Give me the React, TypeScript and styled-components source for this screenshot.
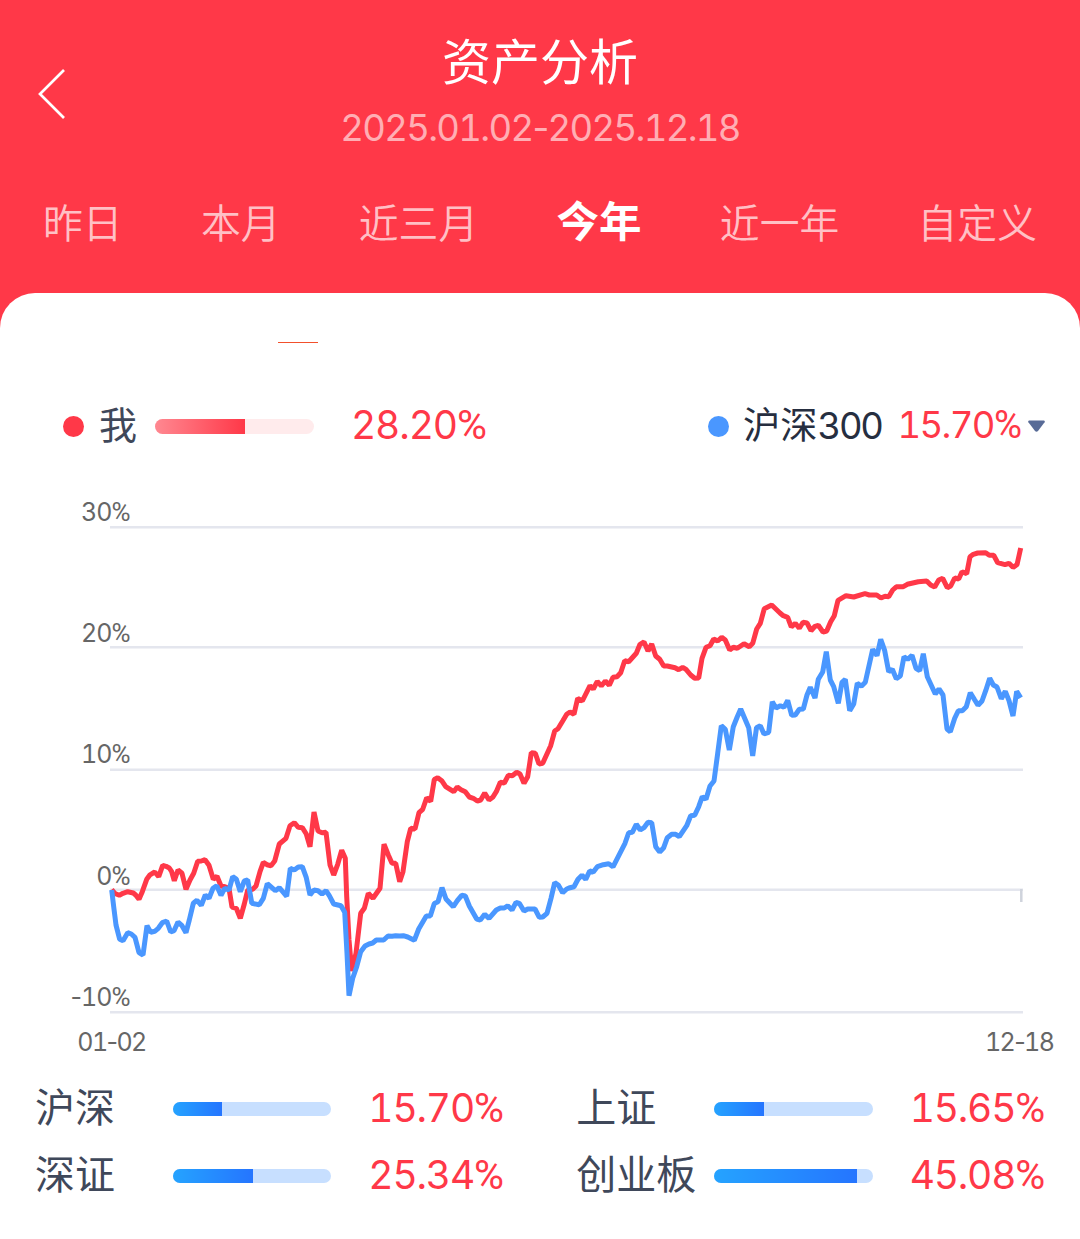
import React from "react";
import styled, { createGlobalStyle } from "styled-components";

const GlobalStyle = createGlobalStyle`
  * { box-sizing: border-box; }
  body {
    margin: 0;
    background: #fff;
    font-family: Inter, "Noto Sans CJK SC", sans-serif;
    font-variant-numeric: tabular-nums;
  }
`;

const Page = styled.main`
  width: 1080px;
  height: 1239px;
  overflow: hidden;
  display: flex;
  flex-direction: column;
  background: #ff3848;
`;

const Header = styled.header`
  height: 293px;
  flex: none;
  color: #fff;
`;

const TitleBar = styled.div`
  display: grid;
  grid-template-columns: 140px 1fr 140px;
  height: 185px;
`;

const BackButton = styled.button`
  display: flex;
  align-items: flex-start;
  padding: 66px 0 0 36px;
  border: 0;
  background: none;
`;

const Heading = styled.div`
  display: flex;
  flex-direction: column;
  align-items: center;
  padding-top: 33px;
`;

const Title = styled.h1`
  margin: 0;
  font-size: 49px;
  line-height: 60px;
  font-weight: 400;
`;

const DateRange = styled.div`
  margin-top: 10px;
  font-size: 36.5px;
  line-height: 50px;
  letter-spacing: -1.67px;
  white-space: nowrap;
  color: rgba(255, 255, 255, 0.6);
`;

const Dash = styled.span`
  font-variant-numeric: normal;
`;

const Tabs = styled.nav`
  display: flex;
  justify-content: space-between;
  align-items: center;
  height: 72px;
  padding: 0 43px 0 43px;
`;

const Tab = styled.a<{ $active?: boolean }>`
  font-family: "Noto Sans CJK SC", sans-serif;
  font-size: ${(p) => (p.$active ? 42.5 : 39.8)}px;
  font-weight: ${(p) => (p.$active ? 700 : 350)};
  line-height: 60px;
  padding-bottom: ${(p) => (p.$active ? 4 : 0)}px;
  color: ${(p) => (p.$active ? "#fff" : "rgba(255,255,255,0.7)")};
`;

const Panel = styled.section`
  flex: 1;
  display: flex;
  flex-direction: column;
  background: #fff;
  border-radius: 35px 35px 0 0;
`;

const Indicator = styled.div`
  width: 40px;
  height: 1px;
  margin: 49px 0 0 278px;
  background: #f2502c;
`;

const Legend = styled.div`
  display: flex;
  align-items: center;
  height: 60px;
  margin-top: 53px;
  padding: 0 35px 0 63px;
`;

const Dot = styled.i<{ $color: string }>`
  width: 21px;
  height: 21px;
  flex: none;
  border-radius: 50%;
  background: ${(p) => p.$color};
`;

const SelfName = styled.span`
  width: 56px;
  margin-left: 15px;
  padding-bottom: 2px;
  font-size: 38px;
  line-height: 60px;
  color: #3f485a;
`;

const BenchmarkName = styled.span`
  width: 154px;
  margin-left: 14px;
  padding-bottom: 1px;
  font-size: 37.3px;
  line-height: 60px;
  white-space: nowrap;
  color: #262e40;
`;

const NameDigits = styled.span`
  font-size: 36.5px;
  letter-spacing: -2.3px;
`;

const Benchmark = styled.div`
  display: flex;
  align-items: center;
  margin-left: auto;
`;

const Caret = styled.svg`
  margin-left: 6px;
`;

const Track = styled.div<{ $color: string; $height: number; $width: number }>`
  width: ${(p) => p.$width}px;
  height: ${(p) => p.$height}px;
  flex: none;
  overflow: hidden;
  border-radius: 8px;
  background: ${(p) => p.$color};
`;

const Fill = styled.div<{ $from: string; $to: string }>`
  height: 100%;
  background: linear-gradient(90deg, ${(p) => p.$from}, ${(p) => p.$to});
`;

const Percent = styled.span<{ $width: number; $size: number; $tracking: number }>`
  width: ${(p) => p.$width}px;
  flex: none;
  display: flex;
  justify-content: flex-end;
  padding-bottom: 2px;
  font-size: ${(p) => p.$size}px;
  line-height: 60px;
  letter-spacing: ${(p) => p.$tracking}px;
  white-space: nowrap;
  color: #ff3848;
`;

const PercentSign = styled.span`
  font-family: Roboto, sans-serif;
  font-size: 1.05em;
  letter-spacing: 0;
`;

const Chart = styled.svg`
  display: block;
  flex: none;
`;

const AxisDash = styled.tspan`
  font-variant-numeric: normal;
`;

const Indices = styled.div`
  display: grid;
  grid-template-columns: 541.3px 1fr;
  grid-auto-rows: 67px;
  padding: 0 34px 0 35px;
`;

const IndexRow = styled.div`
  display: flex;
  align-items: center;
`;

const IndexName = styled.span`
  width: 138px;
  flex: none;
  font-size: 40px;
  line-height: 60px;
  padding-bottom: 1px;
  white-space: nowrap;
  color: #3f485a;
`;

const mine =
  "111.7,889.5 115,893.5 119.3,895.3 123,893.3 127.7,891.7 133.3,893 135.7,895 139,899.3 142.3,891.7 146.7,879.3 150,874.8 154.7,872 158.7,876.7 162.7,865.3 166,866.3 169.3,868 171.7,871.7 174.3,880.7 178,870 182,873.3 186,889.3 190,880 193.7,873.3 197.7,861.3 201.3,861 205,859.7 209,865.3 213.3,879.3 217,876.3 221,886 225,886.7 229,888.3 232,907 236.3,908.3 240.3,918.3 244.3,904 247.7,890 252.7,889.3 256,886 260,871.7 263.3,862.3 267,864.7 271,865.7 274.7,861 279.3,844 286,838.3 290,825.7 294.3,822.7 298.3,827.3 302.3,827.7 306.3,834 310,846.7 314,812 318,831 322,832.7 326,832.3 330,865 333.7,875 337.7,864.3 341.7,850.3 345.3,858.3 346.7,896.7 349,940 351.7,971 356,953.3 360.7,913.3 364.3,908.3 368.3,893.3 373,898.3 380,888.3 384,844.3 388.3,855 392,863.3 395.7,863.3 399.7,881.7 403,871.7 407.3,841.7 410.7,828.3 415,829 419,812.7 422.7,809.3 426.7,797.7 430.7,801.3 434.3,779.5 437.7,777.7 441.7,780.7 445.7,786.7 453.7,791.7 457.3,787 461,789.7 465.3,791.7 469.3,797 473.3,798.3 477.3,801 480.7,800 484.7,793 489,800 492.7,797.3 496.3,791.7 500.3,782.3 504.3,783 508.3,775.3 512.3,775.7 516.7,772.3 520,774 524,783.3 527.7,776.7 531.3,752.7 535.3,753.3 539,764 542.7,763.3 550.7,745.7 554.7,731 558,728.7 562.7,721 566.7,714.3 570,712 574,714.3 577.7,698.3 582.3,701 590,685.7 593.3,689 597.3,681.3 601.3,686 605.3,681 609.3,685.3 613,677.3 617,676.7 620.7,672.7 624.7,660.7 628.7,661.7 636.3,653.3 640,644.3 644,642 648,651 651.7,644 655.7,656 659.7,659.3 663.7,666 667.3,666 675,667.7 678.7,669.7 682.7,667.3 686,669.3 690.7,675 694.7,678.3 698.7,678 702,658.3 706,647.3 710,645.7 713.7,639 717.7,641 721.7,637.3 725.3,640 729.7,650 733.3,647.3 737.3,648.3 744,643.7 749.3,646.7 752.7,643.3 756.7,629 760.3,623.3 764.3,608.7 771.7,605 780,613 783.3,615.7 787.7,617.3 791.3,627 795.3,623.3 799.3,628.3 803,622.3 807,623 811,630.7 815,626.3 818.3,625.3 823,632 826.7,631 830.7,621.7 834.3,615.7 838,600.3 846,595.7 853.7,597 865,593.7 869.3,595 876.7,595 881,598 885,596.3 888.7,596.7 892.7,590 896.3,586.8 903.3,586.7 907.3,584.3 918.3,581.7 926.7,581 930.7,585 934.7,587 938.7,580 942.7,578.3 947.3,587.7 950.7,586 954.7,578 958.7,579 962,571.7 966.7,573.7 970,556.7 973.3,554.3 977.7,553 985.7,552.7 989.3,555.3 993.7,555.3 997.7,562.7 1005,564.7 1009,563.3 1013,567.3 1017,564.7 1020.7,548";

const benchmark =
  "111.7,890 113.7,906.7 116,925 119.7,939.3 123,940.7 127.7,932.7 131.3,934 135,937.3 139,952.7 143,955 147,925.7 150.7,932.3 154.7,931.3 158.3,928.3 162.3,922.7 166.7,921 170.7,932 174,930.7 178,922 182,925.7 186,932.7 189.3,920 193.3,903.3 197,900.3 201.3,905.3 205.3,895 209,898.3 213,888.3 216.7,885.7 221,895.3 224.7,888.3 229,890 232.7,876.7 236.3,879 240.3,891.7 244.3,881 247.7,880 251.8,903.3 259.3,904.7 263.3,898.3 267.3,883.7 275.3,890.7 279.3,887.7 286.7,896.3 290.3,868.3 294.3,870 298.3,867 302.3,866.7 306.3,877.7 310,895 314,890 318,890.7 322,894 326,890.7 329.3,895.7 333.7,904 341,905.7 344.7,912.3 347,953.3 349,995.7 352.7,978.3 356.7,966.7 360.7,951.7 365,946 369,944 372.7,943 376.3,940 383.7,940 388,936 392,936.2 395.7,935.7 399.7,936 403.3,935.7 407.7,937 414.3,940.3 418.7,929 426.3,916 430.3,916 434.3,903.5 438,901.8 442,887.7 446,899 453.3,906.7 457.3,900.7 461.7,895.3 465.3,896 469.3,906 476.7,919 480.3,920 484.7,914.3 489,918.3 496.3,910 500.3,908 504.3,908 507.7,905.7 512,910 516,902.3 519.3,903.3 524,911 527.7,909 535,909 539.3,917.3 542.7,917 547,913.3 551,898.3 554.7,882.7 558.3,885 562.7,892.7 566.7,889 570,887.7 574,886.7 578,879.3 582,875.3 585.7,879.3 589.7,871 593.3,872 597.3,866.7 603.3,864.7 608.7,863.7 613,866.8 625,843.3 628.7,832.7 632.3,832.3 636.3,824.3 640.3,830 644,827.7 648,822.3 651.7,822.7 655.7,846.7 659.7,852 663.7,847.7 667.3,837.7 671.7,834.3 675.7,834.3 679.3,836.7 686.7,825.7 690.7,815.7 694.7,815.3 698.7,806.7 702.3,796.7 706,799.3 710,786 714,781 717.7,753.3 721.3,725.7 725.3,729.3 729.3,750 733.3,726.7 737.3,716.7 740.7,709 748.7,727.7 752.7,756 756.5,727.7 760.3,725.7 764,734 768.7,732.3 772.3,701.7 776,708 780.3,705.7 784,707.3 787.7,700.3 791.7,715.3 795.3,715 799.3,709.3 803.3,709 807,695 810.3,687.3 815,698 818.3,679.3 822.7,672 826.3,651.7 830.3,680 833.7,686.7 838.3,703.3 842,682.3 845.3,679.3 849.7,710.7 853.7,704 857.3,683.3 861.3,686.3 865.3,682.3 872.7,649.3 877,655.7 880.7,639.3 884.7,650.7 888.7,671.7 892.3,669.3 896.3,678.7 900.3,676 904,656.7 907.7,659.3 912,655.3 916,668.3 919.7,670.7 923.3,653.7 927.3,676.7 935.3,694 939,689 943,695 947,729 950.3,731.7 954.7,718.3 958.3,710.7 962.3,710.7 966.3,706.7 970.3,692.7 974.3,699.3 978,705.3 982,701 985.7,690.7 989.7,678.3 993.3,685 997,687 1001.3,698.7 1005.3,691.3 1009,700.7 1013,716 1016.7,691.3 1020.7,697.7";

const levels = [
  { sign: "", value: "30", y: 527.3 },
  { sign: "", value: "20", y: 647.3 },
  { sign: "", value: "10", y: 769.7 },
  { sign: "", value: "0", y: 889.7 },
  { sign: "-", value: "10", y: 1012.2 },
];

const labelBaselines = [521, 642, 763, 885, 1006];

const indices = [
  { name: "沪深", value: "15.70", fill: 31 },
  { name: "上证", value: "15.65", fill: 31.5 },
  { name: "深证", value: "25.34", fill: 50.5 },
  { name: "创业板", value: "45.08", fill: 90 },
];

const tabs = ["昨日", "本月", "近三月", "今年", "近一年", "自定义"];

type PercentProps = { value: string; width: number; size: number; tracking: number };

function PercentText({ value, width, size, tracking }: PercentProps) {
  return (
    <Percent $width={width} $size={size} $tracking={tracking}>
      {value}
      <PercentSign>%</PercentSign>
    </Percent>
  );
}

function ReturnsChart() {
  return (
    <Chart width="1080" height="619" viewBox="0 456 1080 619">
      {levels.map((l) => (
        <line key={l.y} x1="110" x2="1023" y1={l.y} y2={l.y} stroke="#e4e6ee" strokeWidth="2.5" />
      ))}
      <line x1="1021.3" x2="1021.3" y1="889" y2="902" stroke="#cfd3dc" strokeWidth="2.5" />
      <g fill="#666" fontSize="25" fontFamily="Inter, sans-serif" letterSpacing="-1">
        {levels.map((l, i) => (
          <text key={l.y} x="130.5" y={labelBaselines[i]} textAnchor="end">
            <AxisDash>{l.sign}</AxisDash>
            {l.value}
            <tspan fontFamily="Roboto, sans-serif" fontSize="26" letterSpacing="0">%</tspan>
          </text>
        ))}
        <g letterSpacing="-1.6">
          <text x="77.3" y="1051">01<AxisDash>-</AxisDash>02</text>
          <text x="1053.3" y="1051" textAnchor="end">12<AxisDash>-</AxisDash>18</text>
        </g>
      </g>
      <g fill="none" strokeWidth="5" strokeLinejoin="bevel">
        <polyline points={mine} stroke="#ff3848" />
        <polyline points={benchmark} stroke="#4a97ff" />
      </g>
    </Chart>
  );
}

export default function App() {
  return (
    <Page>
      <GlobalStyle />
      <Header>
        <TitleBar>
          <BackButton aria-label="返回">
            <svg width="32" height="56" viewBox="0 0 32 56" fill="none" stroke="#fff" strokeWidth="2.7">
              <path d="M28 4 4 28l24 24" />
            </svg>
          </BackButton>
          <Heading>
            <Title>资产分析</Title>
            <DateRange>2025.01.02<Dash>-</Dash>2025.12.18</DateRange>
          </Heading>
        </TitleBar>
        <Tabs>
          {tabs.map((t) => (
            <Tab key={t} $active={t === "今年"}>{t}</Tab>
          ))}
        </Tabs>
      </Header>
      <Panel>
        <Indicator />
        <Legend>
          <Dot $color="#ff3848" />
          <SelfName>我</SelfName>
          <Track $color="#ffebec" $height={15} $width={159}>
            <Fill $from="#ff8891" $to="#ff3848" style={{ width: "56.6%" }} />
          </Track>
          <PercentText value="28.20" width={173} size={39} tracking={-1.1} />
          <Benchmark>
            <Dot $color="#4a97ff" />
            <BenchmarkName>沪深<NameDigits>300</NameDigits></BenchmarkName>
            <PercentText value="15.70" width={125} size={36.5} tracking={-1.6} />
            <Caret width="17" height="12" viewBox="0 0 17 12">
              <path d="M1 0.500h15q1.300 .5.600 1.700L10 11q-1.500 1.500-3 0L.4 2.200Q-.3 1 1 .5z" fill="#586b97" />
            </Caret>
          </Benchmark>
        </Legend>
        <ReturnsChart />
        <Indices>
          {indices.map((r) => (
            <IndexRow key={r.name}>
              <IndexName>{r.name}</IndexName>
              <Track $color="#c7dfff" $height={14} $width={158.4}>
                <Fill $from="#25a3ff" $to="#2575ff" style={{ width: `${r.fill}%` }} />
              </Track>
              <PercentText value={r.value} width={172.6} size={39} tracking={-1.2} />
            </IndexRow>
          ))}
        </Indices>
      </Panel>
    </Page>
  );
}
